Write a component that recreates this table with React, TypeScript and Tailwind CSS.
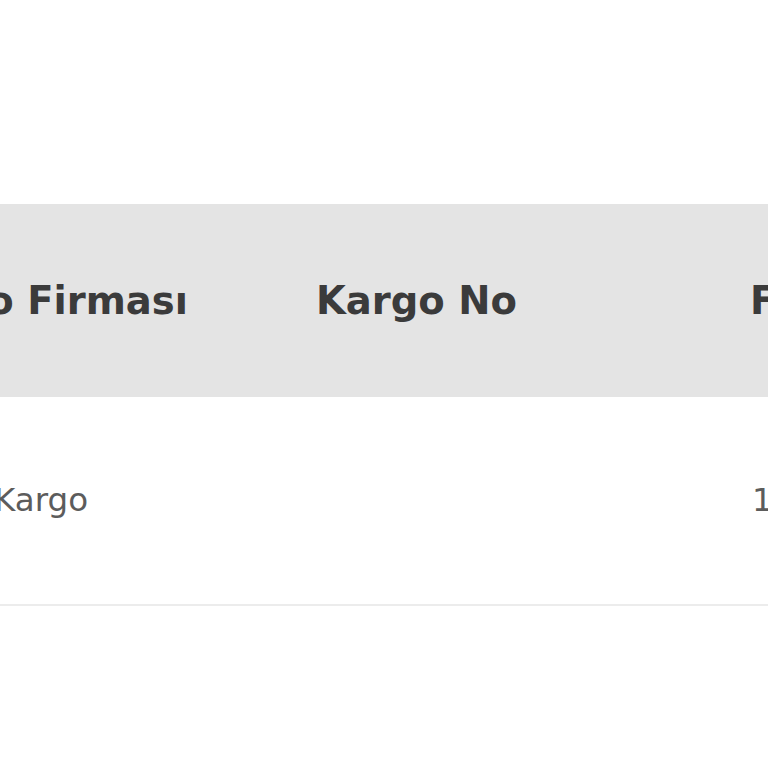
import React from 'react';

const rows = [{ firm: 'Yurtiçi Kargo', no: '', price: '1' }];

const App: React.FC = () => {
  return (
    <div className="w-[768px] h-[768px] bg-white overflow-hidden font-['DejaVu_Sans',sans-serif]">
      <div className="pt-[204px] ml-[-115px] w-[1400px]">
        <div className="grid grid-cols-[431px_434px_300px] bg-[#e4e4e4] h-[193px] items-center text-[38.5px] font-bold text-[#3b3b3b]">
          <div>Kargo Firması</div>
          <div>Kargo No</div>
          <div>Fiyat</div>
        </div>
        {rows.map((r) => (
          <div
            key={r.firm}
            className="grid grid-cols-[431px_434px_300px] h-[209px] items-center border-b-2 border-[#ececec] text-[32.5px] text-[#5c5c5c]"
          >
            <div>{r.firm}</div>
            <div>{r.no}</div>
            <div className="pl-[2px]">{r.price}</div>
          </div>
        ))}
      </div>
    </div>
  );
};

export default App;
